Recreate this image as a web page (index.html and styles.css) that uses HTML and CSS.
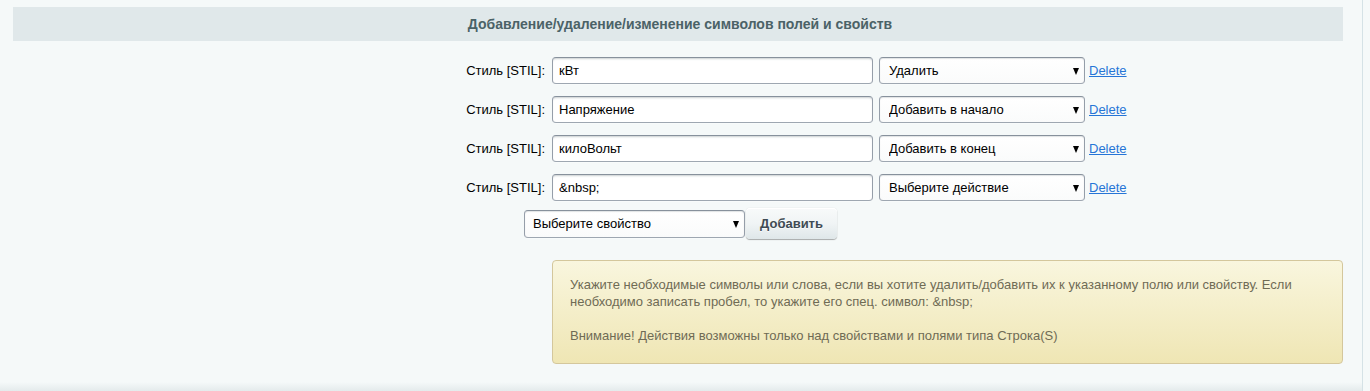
FILE: index.html
```html
<!DOCTYPE html>
<html lang="ru">
<head>
    <meta charset="UTF-8">
    <title>Символы полей и свойств</title>
    <link rel="stylesheet" href="styles.css">
</head>
<body>

<div class="page">
    <div class="panel">
        <!-- Section heading -->
        <div class="section-head">Добавление/удаление/изменение символов полей и свойств</div>

        <div class="edit-table">
            <div class="row">
                <div class="cell-l">Стиль [STIL]:</div>
                <div class="cell-r">
                    <input class="field" type="text" value="кВт">
                    <span class="select-wrap act"><select><option>Удалить</option></select></span>
                    <a href="#" class="del-link">Delete</a>
                </div>
            </div>
            <div class="row">
                <div class="cell-l">Стиль [STIL]:</div>
                <div class="cell-r">
                    <input class="field" type="text" value="Напряжение">
                    <span class="select-wrap act"><select><option>Добавить в начало</option></select></span>
                    <a href="#" class="del-link">Delete</a>
                </div>
            </div>
            <div class="row">
                <div class="cell-l">Стиль [STIL]:</div>
                <div class="cell-r">
                    <input class="field" type="text" value="килоВольт">
                    <span class="select-wrap act"><select><option>Добавить в конец</option></select></span>
                    <a href="#" class="del-link">Delete</a>
                </div>
            </div>
            <div class="row">
                <div class="cell-l">Стиль [STIL]:</div>
                <div class="cell-r">
                    <input class="field" type="text" value="&amp;nbsp;">
                    <span class="select-wrap act"><select><option>Выберите действие</option></select></span>
                    <a href="#" class="del-link">Delete</a>
                </div>
            </div>

            <!-- Add new property -->
            <div class="add-row">
                <span class="select-wrap prop"><select><option>Выберите свойство</option></select></span>
                <button class="adm-btn">Добавить</button>
            </div>

            <div class="row">
                <div class="cell-l"></div>
                <div class="cell-r">
                    <div class="info-message">
                        Укажите необходимые символы или слова, если вы хотите удалить/добавить их к указанному полю или свойству. Если необходимо записать пробел, то укажите его спец. символ: &amp;nbsp;<br><br>
                        Внимание! Действия возможны только над свойствами и полями типа Строка(S)
                    </div>
                </div>
            </div>
        </div>
    </div>
    <div class="panel-bottom"></div>
</div>

</body>
</html>
```

FILE: styles.css
```css
/* General page */
body {
    margin: 0;
    font-family: 'Liberation Sans', Arial, sans-serif;
    font-size: 13px;
    color: #000;
    background-color: #f5f9f9;
}

.page {
    width: 1362px;
    height: 391px;
    border-right: 1px solid #d5e2e6;
    display: flex;
    flex-direction: column;
}

.panel {
    flex: 1;
    padding: 7px 19px 0 13px;
}

.panel-bottom {
    height: 9px;
    background: linear-gradient(to bottom, #f5f9f9, #e4ebec);
}

/* Heading bar */
.section-head {
    height: 34px;
    line-height: 34px;
    background-color: #e0e8ea;
    color: #4b6267;
    font-size: 14px;
    font-weight: bold;
    text-align: center;
    padding-left: 4px;
}

/* Edit table */
.edit-table {
    margin-top: 10px;
}

.row {
    display: grid;
    grid-template-columns: 40% 60%;
}

.cell-l {
    text-align: right;
    padding: 6px 0;
    line-height: 27px;
    color: #000;
}

.cell-r {
    display: flex;
    align-items: center;
    padding: 6px 0 6px 7px;
}

.field {
    box-sizing: border-box;
    width: 321px;
    height: 27px;
    margin: 0 6px 0 0;
    padding: 0 6px;
    font-family: 'Liberation Sans', Arial, sans-serif;
    font-size: 13px;
    color: #000;
    background: #fff;
    border: 1px solid;
    border-color: #87919c #959ea9 #9ea7b1 #959ea9;
    border-radius: 4px;
    box-shadow: 0 1px 0 0 rgba(255, 255, 255, 0.3), inset 0 2px 2px -1px rgba(180, 188, 191, 0.7);
}

/* Selects with a custom arrow */
.select-wrap {
    position: relative;
    display: inline-block;
}

.select-wrap select {
    box-sizing: border-box;
    -webkit-appearance: none;
    appearance: none;
    width: 100%;
    height: 27px;
    margin: 0;
    padding: 0 20px 0 9px;
    font-family: 'Liberation Sans', Arial, sans-serif;
    font-size: 13px;
    color: #000;
    background: linear-gradient(to bottom, #fff, #fafbfb);
    border: 1px solid;
    border-color: #87919c #959ea9 #9ea7b1 #959ea9;
    border-radius: 4px;
    box-shadow: 0 1px 0 0 rgba(255, 255, 255, 0.3), inset 0 1px 1px rgba(180, 188, 191, 0.4);
}

.select-wrap::after {
    content: "";
    position: absolute;
    right: 6px;
    top: 50%;
    margin-top: -3px;
    border-left: 3.5px solid transparent;
    border-right: 3.5px solid transparent;
    border-top: 7px solid #000;
    pointer-events: none;
}

.select-wrap.act {
    width: 206px;
    margin-right: 4px;
}

.select-wrap.prop {
    width: 221px;
}

.select-wrap.prop select {
    height: 28px;
    padding-left: 8px;
}

.del-link {
    color: #2675d7;
    text-decoration: underline;
    font-size: 13px;
}

/* Add row */
.add-row {
    display: flex;
    justify-content: center;
    align-items: center;
    padding: 1px 0 0 5px;
}

.adm-btn {
    height: 31px;
    width: 91px;
    margin-left: 1px;
    padding: 0 13px;
    font-family: 'Liberation Sans', Arial, sans-serif;
    font-size: 13px;
    font-weight: bold;
    color: #3f4b54;
    text-shadow: 0 1px rgba(255, 255, 255, 0.7);
    background: linear-gradient(to bottom, #f8fafa, #f0f4f5 50%, #dfe7e9);
    border: none;
    border-radius: 4px;
    box-shadow: 0 0 1px rgba(0, 0, 0, 0.2), 0 1px 1px rgba(0, 0, 0, 0.3), inset 0 1px #fff;
    cursor: pointer;
}

/* Hint box */
.info-message {
    box-sizing: border-box;
    width: 100%;
    margin-top: 15px;
    padding: 15px 17px 19px;
    line-height: 17px;
    color: #6f6b55;
    background: linear-gradient(to bottom, #f9f6de, #efe6b4);
    border: 1px solid #d4c79c;
    border-radius: 4px;
}
```
